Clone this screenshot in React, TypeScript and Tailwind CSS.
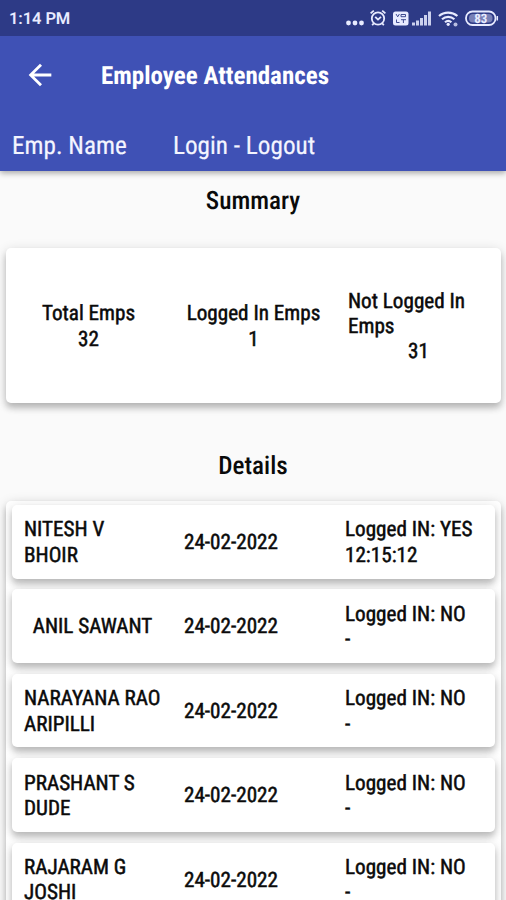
import type { ReactNode } from 'react'

interface Attendance {
  name: string
  date: string
  status: string
  time: string
  centered?: boolean
}

const ATTENDANCES: Attendance[] = [
  { name: 'NITESH V BHOIR', date: '24-02-2022', status: 'YES', time: '12:15:12' },
  { name: 'ANIL SAWANT', date: '24-02-2022', status: 'NO', time: '-', centered: true },
  { name: 'NARAYANA RAO ARIPILLI', date: '24-02-2022', status: 'NO', time: '-' },
  { name: 'PRASHANT S DUDE', date: '24-02-2022', status: 'NO', time: '-' },
  { name: 'RAJARAM G JOSHI', date: '24-02-2022', status: 'NO', time: '-' },
]

const cardShadow = 'shadow-[0_5px_6px_rgba(0,0,0,0.2),0_2px_12px_rgba(0,0,0,0.14)]'

function StatusBar() {
  return (
    <div className="flex h-[35.500px] items-center justify-between bg-[#2d3a86] pl-[9px] pr-[7px] pt-[2px] text-[#e8ebff]">
      <span className="pt-[2px] font-[Roboto] text-[16.500px] font-semibold leading-5 tracking-[-0.1px] [font-stretch:100%]">1:14 PM</span>
      <svg width="154" height="22" viewBox="0 0 154 22" fill="none" stroke="currentColor">
        <g fill="currentColor" stroke="none">
          <circle cx="3.500" cy="15" r="2.400" />
          <circle cx="10" cy="15" r="2.400" />
          <circle cx="16.500" cy="15" r="2.400" />
        </g>
        <g strokeWidth="1.800">
          <circle cx="33" cy="10.500" r="6.200" />
          <path d="M30.200 8.800l2.800 2.800 3-2.800M25.600 5.400l3.200-2.800M40.400 5.400l-3.200-2.800M28.800 15.200l-1.600 2M37.200 15.200l1.600 2" />
        </g>
        <rect x="48" y="3.500" width="15.500" height="14" rx="2.500" fill="currentColor" stroke="none" />
        <path d="M51 6l1.700 2.800 1.700-2.800M56 6.500h4.500v2.200H56zM51.500 11.500v3h3M56 11.700h5M58.400 11.700v3.300" stroke="#2d3a86" strokeWidth="0.900" />
        <path d="M68.500 14.500v3M72.500 12.500v5M76.500 10v7.500M80.500 7v10.500M84.500 3.500v14" strokeWidth="3" opacity="0.85" />
        <path d="M94 8c5.200-4.600 13-4.600 18.400 0M97 11.300c3.600-3.200 8.800-3.200 12.400 0M100 14.300c1.900-1.700 4.500-1.700 6.400 0" strokeWidth="2.200" />
        <circle cx="103.200" cy="16.300" r="1.600" fill="currentColor" stroke="none" />
        <circle cx="110.500" cy="16.500" r="2" fill="currentColor" stroke="none" opacity="0.75" />
        <rect x="121" y="3.500" width="29.500" height="13.500" rx="6.500" strokeWidth="1.800" />
        <rect x="124" y="6" width="23.500" height="8.500" rx="4" fill="currentColor" stroke="none" opacity="0.4" />
        <path d="M152.300 8v4.500" strokeWidth="1.500" />
        <text x="135.700" y="14.800" textAnchor="middle" fontSize="13" fontWeight="700" fontFamily="Roboto, sans-serif" fill="currentColor" stroke="none">83</text>
      </svg>
    </div>
  )
}

function AppBar() {
  return (
    <header className="relative z-10 shadow-[0_2px_6px_rgba(0,0,0,0.35)]">
      <StatusBar />
      <div className="h-[135px] bg-[#3f51b5] text-white">
        <div className="flex h-[79px] items-center">
          <svg className="ml-[23px] shrink-0" width="34" height="34" viewBox="0 0 24 24" fill="currentColor">
            <path d="M20 11H7.830l5.590-5.590L12 4l-8 8 8 8 1.410-1.410L7.830 13H20v-2z" />
          </svg>
          <h1 className="ml-[44px] pt-[3px] text-[25px] font-bold">Employee Attendances</h1>
        </div>
        <div className="flex h-[60px] items-center pl-3 pt-[4px] text-[25.200px] text-[#f4f5ff] [-webkit-text-stroke:0.2px_#f4f5ff]">
          <span className="w-[161px]">Emp. Name</span>
          <span>Login - Logout</span>
        </div>
      </div>
    </header>
  )
}

function SummaryItem({ value, children }: { value: number; children: ReactNode }) {
  return (
    <div className="flex flex-col items-center justify-center pt-[2px]">
      {children}
      <div>{value}</div>
    </div>
  )
}

function AttendanceRow({ row }: { row: Attendance }) {
  return (
    <div className={`flex h-[73.500px] shrink-0 items-center rounded-[5px] bg-white pt-[2px] ${cardShadow}`}>
      <div className={row.centered ? 'w-[161px] text-center' : 'w-[161px] pl-3 pr-[10px]'}>{row.name}</div>
      <div className="w-[161px] pl-[11px]">{row.date}</div>
      <div className="pl-[11px]">
        <div>Logged IN: {row.status}</div>
        <div>{row.time}</div>
      </div>
    </div>
  )
}

export default function App() {
  return (
    <div className="h-[900px] w-[506px] overflow-hidden bg-[#fafafa] font-['Roboto_Condensed',Roboto,sans-serif] text-[21.150px] leading-[25.300px] text-[#0a0a0a] [font-stretch:75%] [text-rendering:geometricPrecision]">
      <AppBar />
      <h2 className="pt-[16px] text-center text-[25.200px] font-medium leading-[30px]">Summary</h2>
      <section className={`ml-[6px] mr-[5px] mt-[31.500px] grid h-[155px] grid-cols-3 rounded-[5px] bg-white [-webkit-text-stroke:0.5px_#0a0a0a] ${cardShadow}`}>
        <SummaryItem value={32}><div>Total Emps</div></SummaryItem>
        <SummaryItem value={1}><div>Logged In Emps</div></SummaryItem>
        <SummaryItem value={31}><div className="w-[141px]">Not Logged In<br />Emps</div></SummaryItem>
      </section>
      <h2 className="pt-[49px] text-center text-[25.200px] font-medium leading-[30px]">Details</h2>
      <section className={`ml-[6px] mr-[5px] mt-[19px] flex h-[440px] flex-col gap-[10.900px] rounded-[5px] bg-white px-[6px] pt-[4px] [-webkit-text-stroke:0.5px_#0a0a0a] ${cardShadow}`}>
        {ATTENDANCES.map(row => <AttendanceRow key={row.name} row={row} />)}
      </section>
    </div>
  )
}
